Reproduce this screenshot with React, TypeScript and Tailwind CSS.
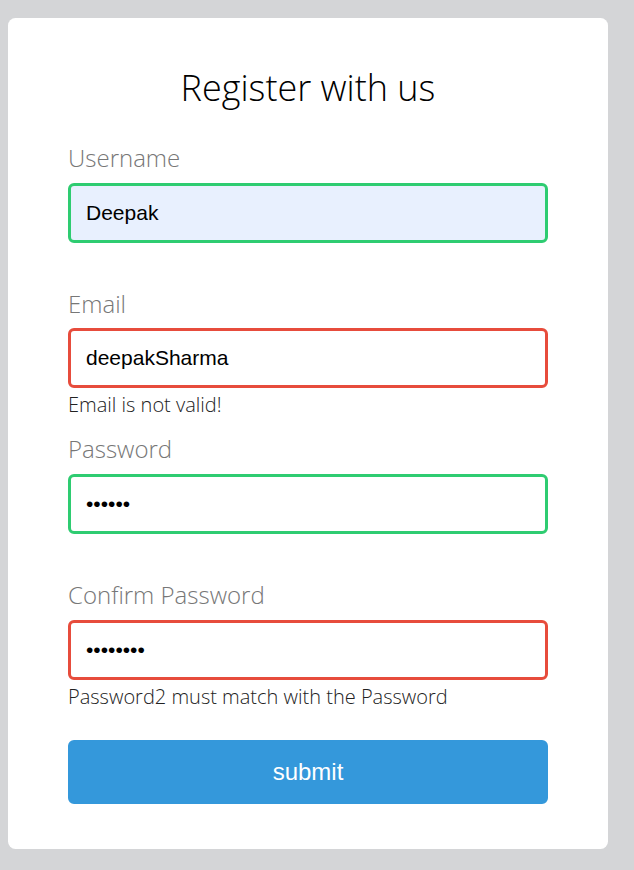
import React from "react";

type FieldProps = {
  label: string;
  value: string;
  type?: string;
  state: "success" | "error";
  error?: string;
  autofill?: boolean;
};

function Field({ label, value, type = "text", state, error, autofill }: FieldProps) {
  const border = state === "success" ? "border-[#2ecc71]" : "border-[#e74c3c]";
  const bg = autofill ? "bg-[#e8f0fe]" : "bg-white";
  return (
    <div className="mb-[15px]">
      <label className="block text-[24px] leading-[1.362] font-light text-[#777] mb-[8px]">{label}</label>
      <input
        type={type}
        value={value}
        readOnly
        className={`block w-full box-border rounded-[6px] border-[3px] ${border} ${bg} px-[15px] py-[15px] text-[21px] leading-[normal] text-black outline-none [font-family:'Liberation_Sans',Arial,sans-serif]`}
      />
      <div className="h-[30px] flex items-end">
        {error ? (
          <small className="block text-[20px] leading-[1.362] font-light text-[#222]">{error}</small>
        ) : null}
      </div>
    </div>
  );
}

export default function App() {
  return (
    <div className="min-h-[870px] w-full bg-[#d4d5d7] pl-[8px] pt-[18px] [font-family:'Open_Sans',sans-serif]">
      <div className="w-[600px] rounded-[7.5px] bg-white px-[60px] py-[45px]">
        <h2 className="m-0 mb-[30px] text-center text-[36px] leading-[1.362] font-light text-black">
          Register with us
        </h2>
        <Field label="Username" value="Deepak" state="success" autofill />
        <Field label="Email" value="deepakSharma" state="error" error="Email is not valid!" />
        <Field label="Password" value="123456" type="password" state="success" />
        <Field
          label="Confirm Password"
          value="12345678"
          type="password"
          state="error"
          error="Password2 must match with the Password"
        />
        <button className="mt-[30px] block w-full rounded-[6px] border-[3px] border-[#3498db] bg-[#3498db] py-[15px] text-[24px] leading-[normal] text-white [font-family:'Liberation_Sans',Arial,sans-serif]">
          submit
        </button>
      </div>
    </div>
  );
}
